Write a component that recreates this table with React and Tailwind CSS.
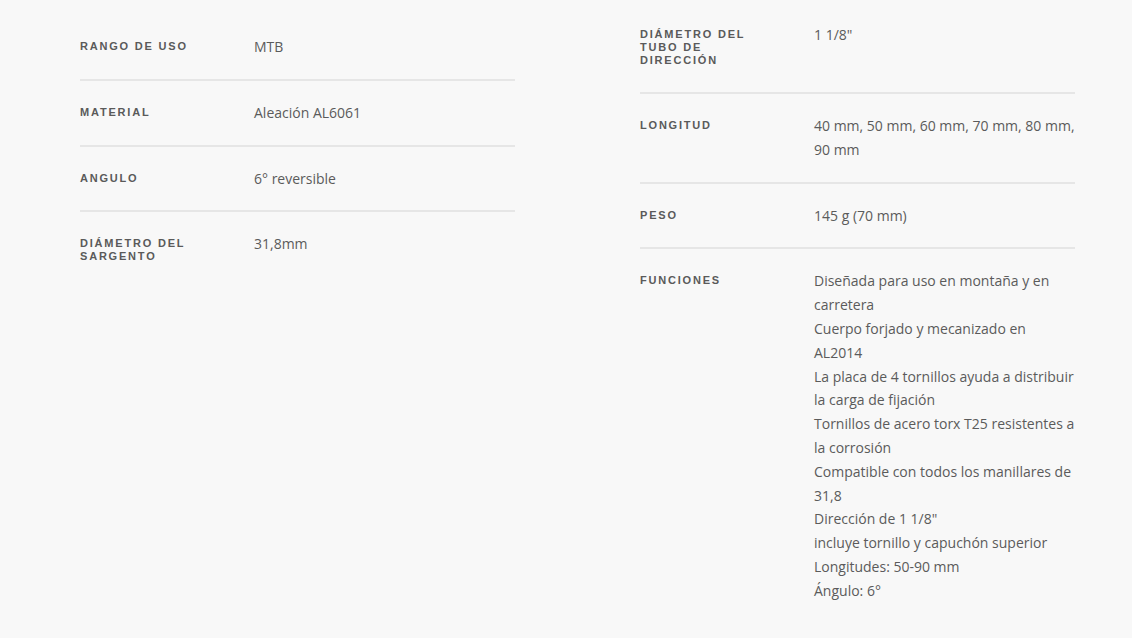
import React from "react";

const left = [
  ["Rango de uso", ["MTB"]],
  ["Material", ["Aleación AL6061"]],
  ["Angulo", ["6° reversible"]],
  ["Diámetro del Sargento", ["31,8mm"]],
];

const right = [
  ["Diámetro del tubo de dirección", ['1 1/8"']],
  ["Longitud", ["40 mm, 50 mm, 60 mm, 70 mm, 80 mm, 90 mm"]],
  ["Peso", ["145 g (70 mm)"]],
  [
    "Funciones",
    [
      "Diseñada para uso en montaña y en carretera",
      "Cuerpo forjado y mecanizado en AL2014",
      "La placa de 4 tornillos ayuda a distribuir la carga de fijación",
      "Tornillos de acero torx T25 resistentes a la corrosión",
      "Compatible con todos los manillares de 31,8",
      'Dirección de 1 1/8"',
      "incluye tornillo y capuchón superior",
      "Longitudes: 50-90 mm",
      "Ángulo: 6°",
    ],
  ],
];

function Row({ label, values, first }) {
  return (
    <div
      className={
        "grid grid-cols-[174px_1fr] pt-5 pb-5 " +
        (first ? "" : "border-t-2 border-[#e6e6e6]")
      }
    >
      <div
        className="pr-[40px] pt-[5px] pb-[5px] text-[11px] leading-[13px] font-bold uppercase tracking-[1.8px] text-[#5a5a5a]"
        style={{ fontFamily: '"Liberation Sans", Arial, sans-serif' }}
      >
        {label}
      </div>
      <div
        className="text-[14px] leading-[1.7] text-[#5b5b5b]"
        style={{ fontFamily: '"Open Sans", sans-serif' }}
      >
        {values.map((v, i) => (
          <div key={i}>{v}</div>
        ))}
      </div>
    </div>
  );
}

export default function App() {
  return (
    <div className="min-h-[638px] w-full bg-[#f8f8f8]">
      <div className="flex pl-[80px] pt-[3px] gap-[125px] items-start">
        <div className="w-[435px] mt-[12px]">
          {left.map(([l, v], i) => (
            <Row key={i} label={l} values={v} first={i === 0} />
          ))}
        </div>
        <div className="w-[435px]">
          {right.map(([l, v], i) => (
            <Row key={i} label={l} values={v} first={i === 0} />
          ))}
        </div>
      </div>
    </div>
  );
}
